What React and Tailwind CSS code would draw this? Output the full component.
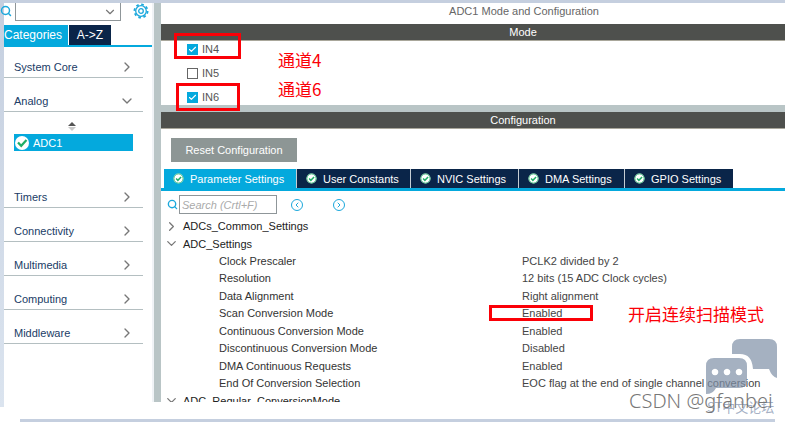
import React, { useState } from 'react';
import { Check, ChevronDown, ChevronRight, ChevronLeft, Search } from 'lucide-react';

const modes = [
  { id: 'in4', label: 'IN4', enabled: true },
  { id: 'in5', label: 'IN5', enabled: false },
  { id: 'in6', label: 'IN6', enabled: true },
];

const categories = ['System Core', 'Analog', 'Timers', 'Connectivity', 'Multimedia', 'Computing', 'Middleware'];

const tabs = ['Parameter Settings', 'User Constants', 'NVIC Settings', 'DMA Settings', 'GPIO Settings'];

const tabWidths = ['w-[133px]', 'w-[114px]', 'w-[108px]', 'w-[106px]', 'w-[108px]'];

const settings = [
  ['Clock Prescaler', 'PCLK2 divided by 2'],
  ['Resolution', '12 bits (15 ADC Clock cycles)'],
  ['Data Alignment', 'Right alignment'],
  ['Scan Conversion Mode', 'Enabled'],
  ['Continuous Conversion Mode', 'Enabled'],
  ['Discontinuous Conversion Mode', 'Disabled'],
  ['DMA Continuous Requests', 'Enabled'],
  ['End Of Conversion Selection', 'EOC flag at the end of single channel conversion'],
];

const StatusIcon = ({ className }) => (
  <svg viewBox="0 0 12 12" className={className} aria-hidden="true">
    <circle cx="6" cy="6" r="5.500" fill="#fff" />
    <circle cx="6" cy="6" r="5" fill="none" stroke="#3dbb7b" strokeWidth="1" />
    <path d="M3.4 6.1 5.3 8 8.8 4.3" fill="none" stroke="#1fae66" strokeWidth="1.6" />
  </svg>
);

const GearIcon = () => (
  <svg viewBox="0 0 16 16" className="h-4 w-4" fill="none" stroke="#1ba8dc" aria-hidden="true">
    <circle cx="8" cy="8" r="6.600" strokeWidth="1.8" strokeDasharray="2.6 2.584" />
    <circle cx="8" cy="8" r="5.300" strokeWidth="1.3" />
    <circle cx="8" cy="8" r="2.300" strokeWidth="1.3" />
  </svg>
);

const Sidebar = () => {
  const [open, setOpen] = useState('Analog');

  return (
    <aside className="w-[150px] shrink-0 border-r-2 border-[#f0f3f6]">
      {/* Search and settings */}
      <div className="flex h-[22px] items-start">
        <Search size={12} strokeWidth={3} className="-ml-1 mt-0.5 mr-[3px] shrink-0 text-[#1ba8dc]" />
        <div className="relative w-[106px]">
          <select aria-label="Search peripherals" className="block h-[18px] w-full appearance-none border border-t-0 border-[#8f9699] bg-white">
            <option></option>
          </select>
          <ChevronDown size={14} className="pointer-events-none absolute right-1 top-0.5 text-[#777]" />
        </div>
        <button type="button" aria-label="Settings" className="ml-3">
          <GearIcon />
        </button>
      </div>

      <div className="flex h-[22px] gap-px border-b-2 border-[#04a9dd] text-[12px] text-white">
        <button type="button" className="w-16 bg-[#04a9dd] text-left">Categories</button>
        <button type="button" className="w-[42px] bg-[#0a2549]">A-&gt;Z</button>
      </div>

      <ul className="flex flex-col gap-3 pt-[9px] text-[#203c66]">
        {categories.map((name) => (
          <li key={name}>
            <button
              type="button"
              onClick={() => setOpen(name)}
              className="flex h-[22px] w-[139px] items-center justify-between border-b border-[#b4bfc1] pl-2.5 pr-2"
            >
              <span>{name}</span>
              {open === name ? (
                <ChevronDown size={16} strokeWidth={2} className="text-[#777]" />
              ) : (
                <ChevronRight size={16} strokeWidth={2} className="text-[#777]" />
              )}
            </button>
            {name === 'Analog' && (
              <div className="h-[62px] pl-2.5 pt-2.5">
                <svg viewBox="0 0 8 9" className="ml-[54px] mb-[3px] block h-[9px] w-2" aria-hidden="true">
                  <path d="M0 4 4 0 8 4Z" fill="#555" />
                  <path d="M0 5H8L4 9Z" fill="#c9c9c9" />
                </svg>
                <button type="button" className="flex h-[17px] w-[119px] items-center gap-1 bg-[#04a9dd] pl-px text-white">
                  <svg viewBox="0 0 14 14" className="h-3.5 w-3.5" aria-hidden="true">
                    <circle cx="7" cy="7" r="7" fill="#fff" />
                    <path d="M3 6.500 6.200 9.800 11.500 4" fill="none" stroke="#1fae66" strokeWidth="2.2" />
                  </svg>
                  ADC1
                </button>
              </div>
            )}
          </li>
        ))}
      </ul>
    </aside>
  );
};

const ModePanel = () => {
  const [checked, setChecked] = useState(modes.filter((m) => m.enabled).map((m) => m.id));

  const toggle = (id) => {
    setChecked(checked.includes(id) ? checked.filter((c) => c !== id) : [...checked, id]);
  };

  return (
    <section>
      <h1 className="h-[21px] pl-[102px] text-center leading-4 text-[#666]">ADC1 Mode and Configuration</h1>
      <h2 className="h-[17px] border-b border-[#a9a79b] bg-[#4e504d] pl-[100px] text-center leading-4 text-white">Mode</h2>
      <div className="flex h-16 flex-col overflow-hidden pl-[26px]">
        {modes.map((mode) => (
          <label key={mode.id} htmlFor={mode.id} className="flex h-6 shrink-0 items-start gap-1 text-[#555]">
            <span className="relative mt-[3px] block h-[11px] w-[11px]">
              <input
                id={mode.id}
                type="checkbox"
                checked={checked.includes(mode.id)}
                onChange={() => toggle(mode.id)}
                className="block h-[11px] w-[11px] appearance-none border border-[#666] bg-white checked:border-[#04a9dd] checked:bg-[#04a9dd]"
              />
              {checked.includes(mode.id) && (
                <Check size={9} strokeWidth={3} className="pointer-events-none absolute left-px top-px text-white" />
              )}
            </span>
            {mode.label}
          </label>
        ))}
      </div>
    </section>
  );
};

const ConfigurationPanel = () => {
  const [active, setActive] = useState(tabs[0]);

  return (
    <section className="border-t-[7px] border-[#b9c5c6]">
      <h2 className="h-[17px] border-b border-[#a9a79b] bg-[#4e504d] pl-[100px] text-center leading-4 text-white">Configuration</h2>
      <button type="button" className="ml-2.5 mt-[9px] block h-6 w-[126px] bg-[#8d9695] text-white">
        Reset Configuration
      </button>

      {/* Tabs */}
      <div className="mt-[7px] flex h-[22px] border-b-[3px] border-[#04a9dd] pl-[3px] text-white">
        {tabs.map((tab, i) => (
          <button
            key={tab}
            type="button"
            onClick={() => setActive(tab)}
            className={`flex items-center gap-1.5 whitespace-nowrap border-r border-[#c5cdd3] pl-[9px] last:border-r-0 ${tabWidths[i]} ${active === tab ? 'bg-[#04a9dd]' : 'bg-[#0a2549]'}`}
          >
            <StatusIcon className="h-[11px] w-[11px] shrink-0" />
            {tab}
          </button>
        ))}
      </div>

      {/* Parameter search */}
      <div className="mt-1 flex h-[19px] items-center pl-1.5 text-[#1ba8dc]">
        <Search size={11} strokeWidth={3} />
        <input
          type="text"
          aria-label="Search parameters"
          placeholder="Search (Crtl+F)"
          className="ml-px h-[19px] w-[98px] border border-[#8f9699] px-0.5 italic placeholder:text-[#aaa]"
        />
        <button type="button" aria-label="Previous" className="ml-3.5 flex h-3 w-3 items-center justify-center rounded-full border border-[#1ba8dc]">
          <ChevronLeft size={8} strokeWidth={3} />
        </button>
        <button type="button" aria-label="Next" className="ml-[30px] flex h-3 w-3 items-center justify-center rounded-full border border-[#1ba8dc]">
          <ChevronRight size={8} strokeWidth={3} />
        </button>
      </div>

      {/* Parameter tree */}
      <div className="pt-[3px] text-[#222]">
        <button type="button" className="flex h-[18px] items-center gap-1 pl-[3px]">
          <ChevronRight size={15} strokeWidth={2} className="text-[#777]" />
          ADCs_Common_Settings
        </button>
        <button type="button" className="flex h-[17px] items-center gap-1 pl-[3px]">
          <ChevronDown size={15} strokeWidth={2} className="text-[#777]" />
          ADC_Settings
        </button>
        <table className="h-[140px] w-full table-fixed border-collapse">
          <tbody>
            {settings.map(([name, value]) => (
              <tr key={name}>
                <th scope="row" className="w-[361px] p-0 pl-[58px] text-left font-normal text-[#333]">{name}</th>
                <td className="whitespace-nowrap p-0 text-[#444]">{value}</td>
              </tr>
            ))}
          </tbody>
        </table>
        <div className="h-2.5 overflow-hidden">
          <button type="button" className="flex h-[17px] items-center gap-1 pl-[3px]">
            <ChevronDown size={15} strokeWidth={2} className="text-[#777]" />
            ADC_Regular_ConversionMode
          </button>
        </div>
      </div>
    </section>
  );
};

const Annotations = () => (
  <div className="pointer-events-none absolute inset-0 font-['Noto_Sans_CJK_SC',sans-serif] text-[17px] leading-6 text-[#fb0007]">
    <div className="absolute left-[174px] top-[33px] h-[26px] w-[67px] border-[3px] border-[#fb0007]"></div>
    <div className="absolute left-[176px] top-[83px] h-[28px] w-[64px] border-[3px] border-[#fb0007]"></div>
    <div className="absolute left-[489px] top-[305px] h-4 w-[104px] border-[3px] border-[#fb0007]"></div>
    <span className="absolute left-[278px] top-[48px]">通道4</span>
    <span className="absolute left-[278px] top-[77px]">通道6</span>
    <span className="absolute left-[628px] top-[302px] whitespace-nowrap">开启连续扫描模式</span>
  </div>
);

const Watermark = () => (
  <div className="pointer-events-none absolute inset-0">
    <svg viewBox="0 0 72 56" className="absolute left-[706px] top-[339px] h-14 w-[72px]" fill="#7f90a6" fillOpacity="0.7" aria-hidden="true">
      <path d="M26 14V8Q26 0 34 0H63Q71 0 71 8V39Q66 38 63 30H47Q46 15 34 15H26Z" />
      <path
        fillRule="evenodd"
        d="M8 19H33Q41 19 41 27V41Q41 49 33 49H10Q7 55 0 55V27Q0 19 8 19ZM9 29.700a3.300 3.300 0 1 0 .01 0ZM21 29.700a3.300 3.300 0 1 0 .01 0ZM33 29.700a3.300 3.300 0 1 0 .01 0Z"
      />
    </svg>
    <span className="absolute left-[707px] top-[397px] whitespace-nowrap font-['Noto_Sans_CJK_SC',sans-serif] text-[13px] leading-5 text-[#8d9bb5]/80">
      ST中文论坛
    </span>
    <span className="absolute left-[629px] top-[389px] whitespace-nowrap font-['Noto_Sans',sans-serif] text-[20px] font-light leading-6 text-[#777]">
      CSDN @gfanbei
    </span>
  </div>
);

const App = () => (
  <div className="relative overflow-hidden bg-white font-['Liberation_Sans',Arial,sans-serif] text-[11px] leading-4">
    <div className="h-[3px] bg-[#c5cfdf]"></div>
    <div className="flex">
      <div className="w-1 shrink-0 bg-linear-to-b from-[#c5cfdf] to-[#dbe4ef]"></div>
      <div className="flex min-w-0 flex-1 pb-[5px]">
        <Sidebar />
        <main className="min-w-0 flex-1 border-l-[7px] border-[#b9c5c6]">
          <ModePanel />
          <ConfigurationPanel />
        </main>
      </div>
    </div>
    <div className="ml-5 mr-2.5 mt-3 h-[3px] bg-[#c5cfdf]"></div>

    <Annotations />
    <Watermark />
  </div>
);

export default App;
